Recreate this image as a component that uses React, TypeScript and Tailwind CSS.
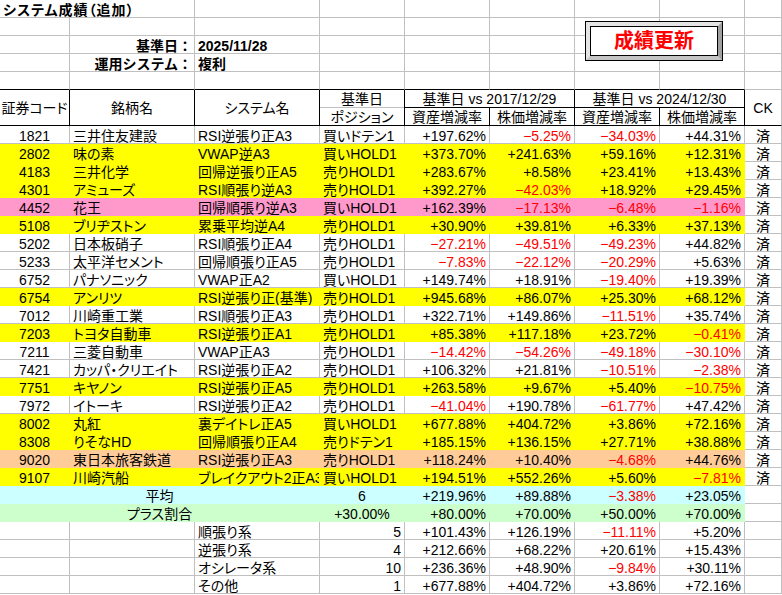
type Fill = 'w' | 'y' | 'p' | 'o' | 'c' | 'g';

const FILL: Record<Fill, string> = {
  w: 'bg-white border-[#c0c0c0]',
  y: 'bg-[#ffff00] border-transparent',
  p: 'bg-[#ff99cc] border-transparent',
  o: 'bg-[#ffcc99] border-transparent',
  c: 'bg-[#ccffff] border-transparent',
  g: 'bg-[#ccffcc] border-transparent',
};

// code, name, system, position, 4 rates, fill
const rows: [string, string, string, string, string, string, string, string, Fill][] = [
  ['1821', '三井住友建設', 'RSI逆張り正A3', '買いドテン1', '+197.62%', '-5.25%', '-34.03%', '+44.31%', 'w'],
  ['2802', '味の素', 'VWAP逆A3', '買いHOLD1', '+373.70%', '+241.63%', '+59.16%', '+12.31%', 'y'],
  ['4183', '三井化学', '回帰逆張り正A5', '売りHOLD1', '+283.67%', '+8.58%', '+23.41%', '+13.43%', 'y'],
  ['4301', 'アミューズ', 'RSI順張り逆A3', '売りHOLD1', '+392.27%', '-42.03%', '+18.92%', '+29.45%', 'y'],
  ['4452', '花王', '回帰順張り逆A3', '買いHOLD1', '+162.39%', '-17.13%', '-6.48%', '-1.16%', 'p'],
  ['5108', 'ブリヂストン', '累乗平均逆A4', '売りHOLD1', '+30.90%', '+39.81%', '+6.33%', '+37.13%', 'y'],
  ['5202', '日本板硝子', 'RSI順張り正A4', '売りHOLD1', '-27.21%', '-49.51%', '-49.23%', '+44.82%', 'w'],
  ['5233', '太平洋セメント', '回帰順張り正A5', '売りHOLD1', '-7.83%', '-22.12%', '-20.29%', '+5.63%', 'w'],
  ['6752', 'パナソニック', 'VWAP正A2', '買いHOLD1', '+149.74%', '+18.91%', '-19.40%', '+19.39%', 'w'],
  ['6754', 'アンリツ', 'RSI逆張り正(基準)', '売りHOLD1', '+945.68%', '+86.07%', '+25.30%', '+68.12%', 'y'],
  ['7012', '川崎重工業', 'RSI順張り正A3', '売りHOLD1', '+322.71%', '+149.86%', '-11.51%', '+35.74%', 'w'],
  ['7203', 'トヨタ自動車', 'RSI逆張り正A1', '売りHOLD1', '+85.38%', '+117.18%', '+23.72%', '-0.41%', 'y'],
  ['7211', '三菱自動車', 'VWAP正A3', '売りHOLD1', '-14.42%', '-54.26%', '-49.18%', '-30.10%', 'w'],
  ['7421', 'カッパ・クリエイト', 'RSI逆張り正A2', '売りHOLD1', '+106.32%', '+21.81%', '-10.51%', '-2.38%', 'w'],
  ['7751', 'キヤノン', 'RSI逆張り正A5', '売りHOLD1', '+263.58%', '+9.67%', '+5.40%', '-10.75%', 'y'],
  ['7972', 'イトーキ', 'RSI逆張り正A2', '売りHOLD1', '-41.04%', '+190.78%', '-61.77%', '+47.42%', 'w'],
  ['8002', '丸紅', '裏デイトレ正A5', '買いHOLD1', '+677.88%', '+404.72%', '+3.86%', '+72.16%', 'y'],
  ['8308', 'りそなHD', '回帰順張り正A4', '売りドテン1', '+185.15%', '+136.15%', '+27.71%', '+38.88%', 'y'],
  ['9020', '東日本旅客鉄道', 'RSI逆張り正A3', '売りHOLD1', '+118.24%', '+10.40%', '-4.68%', '+44.76%', 'o'],
  ['9107', '川崎汽船', 'ブレイクアウト2正A3', '買いHOLD1', '+194.51%', '+552.26%', '+5.60%', '-7.81%', 'y'],
];

const groups: [string, string, string, string, string, string][] = [
  ['順張り系', '5', '+101.43%', '+126.19%', '-11.11%', '+5.20%'],
  ['逆張り系', '4', '+212.66%', '+68.22%', '+20.61%', '+15.43%'],
  ['オシレータ系', '10', '+236.36%', '+48.90%', '-9.84%', '+30.11%'],
  ['その他', '1', '+677.88%', '+404.72%', '+3.86%', '+72.16%'],
];

// Excel-like cell: 18px row, text sits slightly low like bottom-aligned cells
const base = 'h-[18px] shrink-0 whitespace-nowrap border-r border-b leading-[20px]';
const grid = 'border-[#c0c0c0]';

function Pct({ v, fill }: { v: string; fill: Fill }) {
  const neg = v.startsWith('-');
  return (
    <div className={`${base} ${FILL[fill]} w-[85px] pr-[3px] text-right ${neg ? 'text-[#ff0000]' : ''}`}>
      {neg ? '−' + v.slice(1) : v}
    </div>
  );
}

function Blank({ w, className = '' }: { w: string; className?: string }) {
  return <div className={`${base} ${grid} ${w} ${className}`} />;
}

function TopRow({ b, c }: { b?: string; c?: string }) {
  return (
    <div className="flex">
      <Blank w="w-[70px]" />
      <div className={`${base} ${grid} w-[125px] pr-[2px] text-right font-bold [font-feature-settings:normal]`}>{b}</div>
      <div className={`${base} ${grid} w-[125px] pl-[3px] font-bold`}>{c}</div>
      <Blank w="w-[85px]" />
      <Blank w="w-[85px]" />
      <Blank w="w-[85px]" />
      <Blank w="w-[85px]" />
      <Blank w="w-[85px]" />
      <Blank w="w-[37px]" />
    </div>
  );
}

function DataRow({ r }: { r: (typeof rows)[number] }) {
  const [code, name, sys, pos, a, b, c, d, f] = r;
  return (
    <div className="flex">
      <div className={`${base} ${FILL[f]} w-[70px] text-center`}>{code}</div>
      <div className={`${base} ${FILL[f]} w-[125px] pl-[3px]`}>{name}</div>
      <div className={`${base} ${FILL[f]} w-[125px] overflow-hidden pl-[3px]`}>{sys}</div>
      <div className={`${base} ${FILL[f]} w-[85px] pl-[3px]`}>{pos}</div>
      <Pct v={a} fill={f} />
      <Pct v={b} fill={f} />
      <Pct v={c} fill={f} />
      <Pct v={d} fill={f} />
      <div className={`${base} ${grid} w-[37px] text-center`}>済</div>
    </div>
  );
}

function SummaryRow({ label, n, v, f }: { label: string; n: string; v: string[]; f: Fill }) {
  return (
    <div className="flex">
      <div className={`${base} ${FILL[f]} w-[320px] text-center`}>{label}</div>
      <div className={`${base} ${FILL[f]} w-[85px] text-center`}>{n}</div>
      {v.map((x, i) => (
        <Pct key={i} v={x} fill={f} />
      ))}
      <Blank w="w-[37px]" />
    </div>
  );
}

function UpdateButton() {
  return (
    <div className="absolute left-[585px] top-[21px] h-[40px] w-[138px] border border-black">
      <div className="h-full w-full border-[4px] border-t-[#e4e4e4] border-l-[#e4e4e4] border-r-[#a0a0a0] border-b-[#c4c4c4]">
        <div className="flex h-full w-full items-center justify-center border border-black bg-white text-[20px] font-bold text-[#ff0000]">
          成績更新
        </div>
      </div>
    </div>
  );
}

export default function App() {
  return (
    <div className="relative h-[595px] w-[782px] overflow-hidden bg-white font-['Liberation_Sans','Noto_Sans_CJK_JP',sans-serif] text-[14px] text-black [font-feature-settings:'palt']">
      {/* title rows */}
      <div className="flex">
        <div className={`${base} ${grid} w-[195px] pl-[3px] font-bold tracking-[1px]`}>システム成績（追加）</div>
        <Blank w="w-[125px]" />
        <Blank w="w-[85px]" />
        <Blank w="w-[85px]" />
        <Blank w="w-[85px]" />
        <Blank w="w-[85px]" />
        <Blank w="w-[85px]" />
        <Blank w="w-[37px]" />
      </div>
      <TopRow />
      <TopRow b="基準日：" c="2025/11/28" />
      <TopRow b="運用システム：" c="複利" />
      <div className="flex">
        <Blank w="w-[70px]" className="border-b-black" />
        <Blank w="w-[125px]" className="border-b-black" />
        <Blank w="w-[125px]" className="border-b-black" />
        <Blank w="w-[85px]" className="border-b-black" />
        <Blank w="w-[85px]" className="border-b-black" />
        <Blank w="w-[85px]" className="border-b-black" />
        <Blank w="w-[85px]" className="border-b-black" />
        <Blank w="w-[85px]" className="border-b-black" />
        <Blank w="w-[37px]" />
      </div>

      {/* header */}
      <div className="flex h-[36px] leading-[19px]">
        <div className="flex w-[70px] items-center justify-center border-r border-b border-black pt-[2px]">証券コード</div>
        <div className="flex w-[125px] items-center justify-center border-r border-b border-black pt-[2px]">銘柄名</div>
        <div className="flex w-[125px] items-center justify-center border-r border-b border-black pt-[2px]">システム名</div>
        <div className="flex w-[85px] flex-col border-r border-b border-black">
          <div className="h-[18px] border-b border-[#c0c0c0] text-center">基準日</div>
          <div className="h-[17px] text-center">ポジション</div>
        </div>
        <div className="flex w-[170px] flex-col border-b border-black">
          <div className="h-[18px] border-r border-b border-black text-center">基準日 vs 2017/12/29</div>
          <div className="flex h-[17px]">
            <div className="w-[85px] border-r border-black text-center">資産増減率</div>
            <div className="w-[85px] border-r border-black text-center">株価増減率</div>
          </div>
        </div>
        <div className="flex w-[170px] flex-col border-b border-black">
          <div className="h-[18px] border-r border-b border-black text-center">基準日 vs 2024/12/30</div>
          <div className="flex h-[17px]">
            <div className="w-[85px] border-r border-black text-center">資産増減率</div>
            <div className="w-[85px] border-r border-black text-center">株価増減率</div>
          </div>
        </div>
        <div className="flex w-[37px] items-center justify-center border-r border-b border-r-[#c0c0c0] border-b-black pt-[2px]">CK</div>
      </div>

      {rows.map((r) => (
        <DataRow key={r[0]} r={r} />
      ))}

      <SummaryRow label="平均" n="6" v={['+219.96%', '+89.88%', '-3.38%', '+23.05%']} f="c" />
      <SummaryRow label="プラス割合" n="+30.00%" v={['+80.00%', '+70.00%', '+50.00%', '+70.00%']} f="g" />

      {groups.map(([label, n, a, b, c, d]) => (
        <div key={label} className="flex">
          <Blank w="w-[70px]" />
          <Blank w="w-[125px]" />
          <div className={`${base} ${grid} w-[125px] pl-[3px]`}>{label}</div>
          <div className={`${base} ${grid} w-[85px] pr-[3px] text-right`}>{n}</div>
          <Pct v={a} fill="w" />
          <Pct v={b} fill="w" />
          <Pct v={c} fill="w" />
          <Pct v={d} fill="w" />
          <Blank w="w-[37px]" />
        </div>
      ))}

      <UpdateButton />
    </div>
  );
}
